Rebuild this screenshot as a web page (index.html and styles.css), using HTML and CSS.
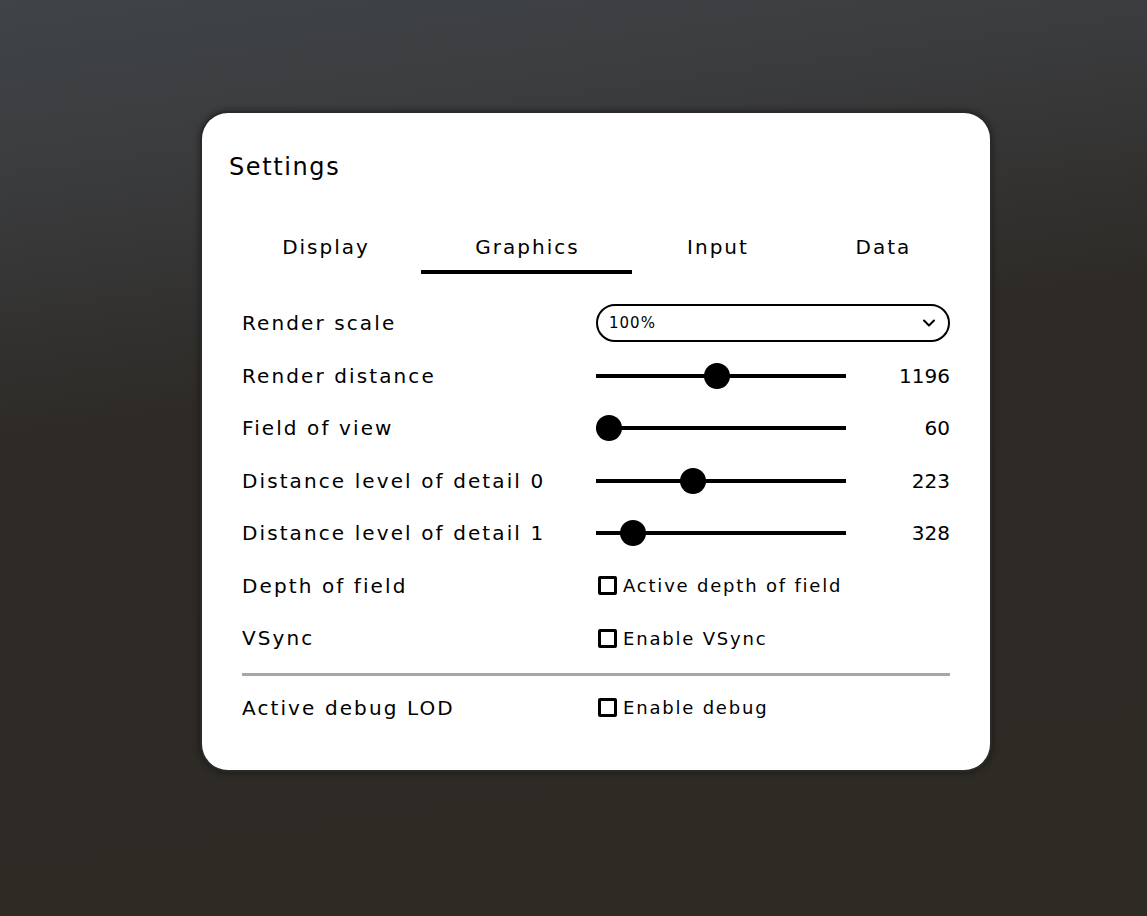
FILE: index.html
```html
<!DOCTYPE html>
<html lang="en">
<head>
<meta charset="utf-8">
<title>Settings</title>
<link rel="stylesheet" href="styles.css">
</head>
<body>
  <div class="card">
    <h1 class="title">Settings</h1>
    <nav class="tabs">
      <div class="tab tab-display">Display</div>
      <div class="tab tab-graphics active">Graphics</div>
      <div class="tab tab-input">Input</div>
      <div class="tab tab-data">Data</div>
    </nav>
    <div class="rows">
      <div class="row">
        <div class="label">Render scale</div>
        <div class="select">
          <span class="select-value">100%</span>
          <svg class="chevron" width="14" height="10" viewBox="0 0 14 10"><path d="M2 2.5 L7 7.5 L12 2.5" fill="none" stroke="#000" stroke-width="2" stroke-linecap="round" stroke-linejoin="round"/></svg>
        </div>
      </div>
      <div class="row">
        <div class="label">Render distance</div>
        <div class="slider-wrap">
          <div class="slider"><div class="track"></div><div class="thumb" style="left: 43.2%"></div></div>
          <div class="value">1196</div>
        </div>
      </div>
      <div class="row">
        <div class="label">Field of view</div>
        <div class="slider-wrap">
          <div class="slider"><div class="track"></div><div class="thumb" style="left: 0%"></div></div>
          <div class="value">60</div>
        </div>
      </div>
      <div class="row">
        <div class="label">Distance level of detail 0</div>
        <div class="slider-wrap">
          <div class="slider"><div class="track"></div><div class="thumb" style="left: 33.6%"></div></div>
          <div class="value">223</div>
        </div>
      </div>
      <div class="row">
        <div class="label">Distance level of detail 1</div>
        <div class="slider-wrap">
          <div class="slider"><div class="track"></div><div class="thumb" style="left: 9.6%"></div></div>
          <div class="value">328</div>
        </div>
      </div>
      <div class="row">
        <div class="label">Depth of field</div>
        <label class="check"><span class="box"></span>Active depth of field</label>
      </div>
      <div class="row">
        <div class="label">VSync</div>
        <label class="check"><span class="box"></span>Enable VSync</label>
      </div>
      <hr class="divider">
      <div class="row">
        <div class="label">Active debug LOD</div>
        <label class="check"><span class="box"></span>Enable debug</label>
      </div>
    </div>
  </div>
</body>
</html>
```

FILE: styles.css
```css
* { box-sizing: border-box; }

html, body {
  margin: 0;
  padding: 0;
}

body {
  width: 1147px;
  height: 916px;
  overflow: hidden;
  background: linear-gradient(172deg, #404447 0%, #3a3b3d 18%, #2e2b27 40%, #2e2a24 100%);
  font-family: "DejaVu Sans", "Open Sans", sans-serif;
  color: #000;
  padding-top: 113px;
}

.card {
  margin-left: 202px;
  width: 788px;
  height: 657px;
  background: #fff;
  border-radius: 26px;
  box-shadow: 0 0 0 2px #2a2a2a, 0 0 6px 3px rgba(0, 0, 0, 0.35);
  padding: 38px 27px 0 27px;
}

.title {
  margin: 0;
  font-size: 24px;
  font-weight: 400;
  line-height: 32px;
  letter-spacing: 1.6px;
}

.tabs {
  display: flex;
  margin-top: 50px;
}

.tab {
  padding: 0 0 9px 2px;
  text-align: center;
  font-size: 20px;
  line-height: 28px;
  border-bottom: 4px solid transparent;
  letter-spacing: 2px;
}

.tab-display { width: 192px; }
.tab-graphics { width: 211px; }
.tab-input { width: 170px; }
.tab-data { width: 161px; }

.tab.active {
  border-bottom-color: #000;
}

.rows {
  padding: 23px 13px 0 13px;
}

.row {
  display: grid;
  grid-template-columns: 354px 1fr;
  align-items: center;
  height: 52.5px;
}

.label {
  font-size: 20px;
  letter-spacing: 2.1px;
}

.select {
  height: 38px;
  border: 2px solid #000;
  border-radius: 19px;
  display: flex;
  align-items: center;
  justify-content: space-between;
  padding: 0 12px 0 11px;
}

.select-value {
  font-size: 15px;
  letter-spacing: 1px;
}

.chevron { display: block; }

.slider-wrap {
  display: flex;
  align-items: center;
  justify-content: space-between;
}

.slider {
  position: relative;
  width: 250px;
  height: 26px;
  display: flex;
  align-items: center;
}

.track {
  width: 100%;
  height: 4px;
  background: #000;
}

.thumb {
  position: absolute;
  top: 0;
  width: 26px;
  height: 26px;
  border-radius: 50%;
  background: #000;
}

.value {
  font-size: 20px;
  letter-spacing: 0;
}

.check {
  display: flex;
  align-items: center;
  font-size: 18px;
  letter-spacing: 1.8px;
}

.box {
  width: 19px;
  height: 19px;
  border: 3px solid #000;
  border-radius: 2px;
  margin: 0 6px 0 2px;
}

.divider {
  margin: 8px 0 6px 0;
  border: 0;
  height: 3px;
  background: #a6a6a6;
}
```
